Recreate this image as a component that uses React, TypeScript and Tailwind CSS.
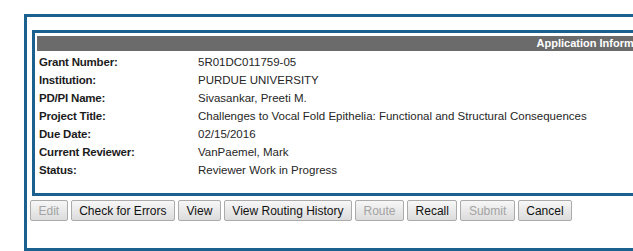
import React from "react";

const rows: [string, string][] = [
  ["Grant Number:", "5R01DC011759-05"],
  ["Institution:", "PURDUE UNIVERSITY"],
  ["PD/PI Name:", "Sivasankar, Preeti M."],
  ["Project Title:", "Challenges to Vocal Fold Epithelia: Functional and Structural Consequences"],
  ["Due Date:", "02/15/2016"],
  ["Current Reviewer:", "VanPaemel, Mark"],
  ["Status:", "Reviewer Work in Progress"],
];

const buttons: [string, boolean][] = [
  ["Edit", false],
  ["Check for Errors", true],
  ["View", true],
  ["View Routing History", true],
  ["Route", false],
  ["Recall", true],
  ["Submit", false],
  ["Cancel", true],
];

export default function App() {
  return (
    <div
      className="w-[633px] h-[251px] overflow-hidden bg-white relative"
      style={{ fontFamily: '"Liberation Sans", Arial, sans-serif' }}
    >
      <div className="pl-[24px] pt-[14px]">
        <div className="w-[652px] h-[237px] border-[3px] border-[#1b6190] pl-[5px] pt-[13px]">
          <div className="w-[636px] h-[166px] border-[3px] border-[#1b6190] px-[2px] pt-[3px]">
            <div className="h-[15px] bg-[#6b6b6b] flex items-center justify-end pr-[3px] text-[11px] font-bold text-white leading-none whitespace-nowrap">
              Application Information
            </div>
            <div className="pt-[3px]">
              {rows.map(([label, value]) => (
                <div key={label} className="h-[18px] flex items-center text-[11.5px] leading-none whitespace-nowrap">
                  <div className="w-[161px] pl-[2px] font-bold text-[#1c1c1c] tracking-[-0.2px]">{label}</div>
                  <div className="text-[#262626]">{value}</div>
                </div>
              ))}
            </div>
          </div>
          <div className="flex gap-[3px] -ml-[2px] mt-[4px]">
            {buttons.map(([label, enabled]) => (
              <div
                key={label}
                className={`h-[21px] px-[7.5px] flex items-center border border-[#ababab] rounded-[2px] bg-gradient-to-b from-[#f7f7f7] to-[#dcdcdc] text-[12px] leading-none whitespace-nowrap ${
                  enabled ? "text-[#111111]" : "text-[#a3a3a3]"
                }`}
              >
                {label}
              </div>
            ))}
          </div>
        </div>
      </div>
    </div>
  );
}
